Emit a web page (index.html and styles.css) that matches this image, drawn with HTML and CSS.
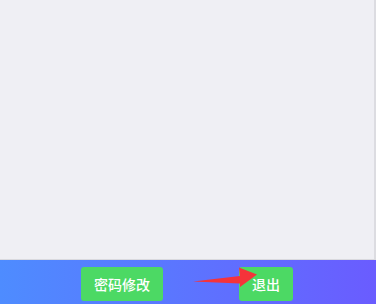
FILE: index.html
```html
<!DOCTYPE html>
<html lang="zh">
<head>
<meta charset="utf-8">
<link rel="stylesheet" href="styles.css">
</head>
<body>
<div class="page">
  <div class="content"></div>
  <div class="footer">
    <button class="btn">密码修改</button>
    <button class="btn">退出</button>
    <svg class="arrow" width="376" height="44" viewBox="0 260 376 44">
      <polygon points="193,281.5 240,276 239,267.5 257,274.5 240,287 240,283.5" fill="#f5333a"/>
    </svg>
  </div>
</div>
</body>
</html>
```
FILE: styles.css
```css
html, body { margin: 0; padding: 0; }
body { width: 376px; height: 304px; overflow: hidden; font-family: "Noto Sans CJK SC", "Noto Sans", sans-serif; }
.page { display: flex; flex-direction: column; height: 304px; }
.content { background: #efeff4; border-bottom: 1px solid #d9d9de; border-right: 2px solid #dcdce1; box-sizing: border-box; height: 260px; }
.footer { position: relative; height: 44px; background: linear-gradient(90deg, #4e8cff 0%, #6a5cff 100%); display: flex; justify-content: center; align-items: flex-start; gap: 76px; padding: 7px 2px 0 0; box-sizing: border-box; }
.btn { height: 34px; padding: 0 13px; background: #4cd964; color: #fff; border: none; border-radius: 3px; font-family: inherit; font-size: 14px; font-weight: 500; line-height: 34px; margin: 0; }
.arrow { position: absolute; left: 0; top: 0; }
```
